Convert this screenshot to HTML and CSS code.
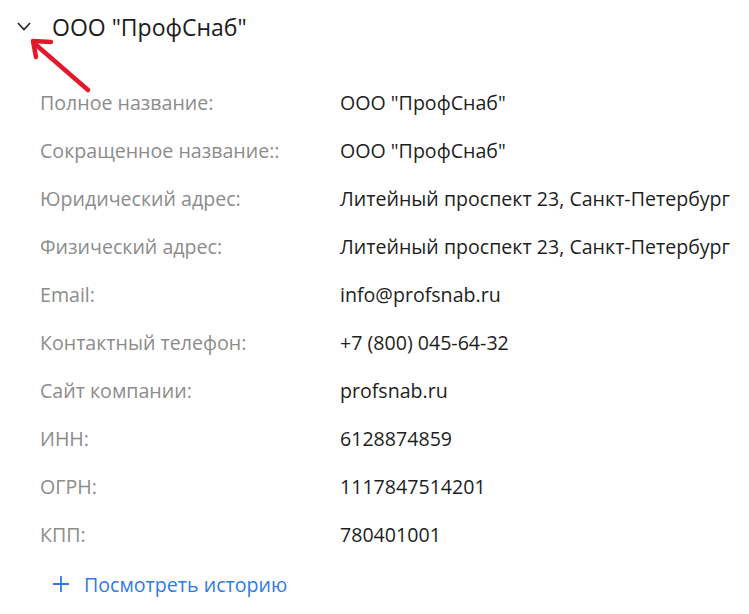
FILE: index.html
```html
<!DOCTYPE html>
<html lang="ru">
<head>
<meta charset="utf-8">
<link rel="stylesheet" href="styles.css">
</head>
<body>
<div class="panel">
  <div class="header">
    <svg class="chevron" width="14" height="9" viewBox="0 0 14 9"><path d="M1 1 L7 7.5 L13 1" fill="none" stroke="#222" stroke-width="1.6"/></svg>
    <span class="title">ООО "ПрофСнаб"</span>
  </div>
  <svg class="annot" width="100" height="110" viewBox="0 0 100 110">
    <path d="M88 90 L35 44" stroke="#e3192b" stroke-width="4.5" stroke-linecap="round" fill="none"/>
    <path d="M36 57 L33 41 L51 42" stroke="#e3192b" stroke-width="4.5" stroke-linecap="round" stroke-linejoin="round" fill="none"/>
  </svg>
  <div class="rows">
    <div class="label">Полное название:</div><div class="value">ООО "ПрофСнаб"</div>
    <div class="label">Сокращенное название::</div><div class="value">ООО "ПрофСнаб"</div>
    <div class="label">Юридический адрес:</div><div class="value">Литейный проспект 23, Санкт-Петербург</div>
    <div class="label">Физический адрес:</div><div class="value">Литейный проспект 23, Санкт-Петербург</div>
    <div class="label">Email:</div><div class="value">info@profsnab.ru</div>
    <div class="label">Контактный телефон:</div><div class="value">+7 (800) 045-64-32</div>
    <div class="label">Сайт компании:</div><div class="value">profsnab.ru</div>
    <div class="label">ИНН:</div><div class="value">6128874859</div>
    <div class="label">ОГРН:</div><div class="value">1117847514201</div>
    <div class="label">КПП:</div><div class="value">780401001</div>
  </div>
  <div class="history">
    <svg class="plus" width="16" height="16" viewBox="0 0 16 16"><path d="M8 0 V16 M0 8 H16" stroke="#2f7be6" stroke-width="1.8"/></svg>
    <span>Посмотреть историю</span>
  </div>
</div>
</body>
</html>
```
FILE: styles.css
```css
html, body {
  margin: 0;
  padding: 0;
  background: #fff;
}
body {
  font-family: "Open Sans", "Noto Sans", sans-serif;
  overflow: hidden;
  width: 749px;
  height: 614px;
}
.panel {
  position: relative;
}
.header {
  display: flex;
  align-items: center;
  height: 54px;
  padding-left: 17px;
}
.chevron {
  margin-right: 21px;
  margin-top: -2px;
}
.title {
  font-size: 23px;
  color: #1a1a1a;
}
.annot {
  position: absolute;
  left: 0;
  top: 0;
}
.rows {
  display: grid;
  grid-template-columns: 300px auto;
  padding-left: 40px;
  margin-top: 25px;
}
.label, .value {
  height: 48px;
  line-height: 48px;
  font-size: 19.6px;
  white-space: nowrap;
}
.label {
  color: #8c8c8c;
}
.value {
  color: #1e1e1e;
}
.history {
  display: flex;
  align-items: center;
  height: 48px;
  padding-left: 53px;
  margin-top: 1px;
  color: #2f7be6;
  font-size: 19.6px;
}
.plus {
  margin-right: 15px;
}
```
